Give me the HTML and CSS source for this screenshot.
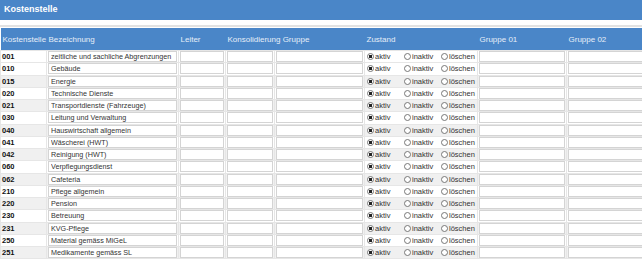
FILE: index.html
```html
<!DOCTYPE html>
<html lang="de">
<head>
    <meta charset="UTF-8">
    <meta name="viewport" content="width=device-width, initial-scale=1.0">
    <title>Kostenstelle</title>
    <link rel="stylesheet" href="styles.css">
</head>
<body>
    <div class="titlebar">Kostenstelle</div>
    <div class="spacer"></div>

    <table class="grid">
        <colgroup>
            <col class="c-code">
            <col class="c-name">
            <col class="c-leiter">
            <col class="c-kons">
            <col class="c-gruppe">
            <col class="c-state">
            <col class="c-g1">
            <col class="c-g2">
        </colgroup>
        <thead>
            <tr>
                <th>Kostenstelle</th>
                <th>Bezeichnung</th>
                <th>Leiter</th>
                <th colspan="2">Konsolidierung Gruppe</th>
                <th>Zustand</th>
                <th>Gruppe 01</th>
                <th>Gruppe 02</th>
            </tr>
        </thead>
        <tbody id="rows"></tbody>
    </table>

<script>
    let data = [
        ["001", "zeitliche und sachliche Abgrenzungen"],
        ["010", "Gebäude"],
        ["015", "Energie"],
        ["020", "Technische Dienste"],
        ["021", "Transportdienste (Fahrzeuge)"],
        ["030", "Leitung und Verwaltung"],
        ["040", "Hauswirtschaft allgemein"],
        ["041", "Wäscherei (HWT)"],
        ["042", "Reinigung (HWT)"],
        ["060", "Verpflegungsdienst"],
        ["062", "Cafeteria"],
        ["210", "Pflege allgemein"],
        ["220", "Pension"],
        ["230", "Betreuung"],
        ["231", "KVG-Pflege"],
        ["250", "Material gemäss MiGeL"],
        ["251", "Medikamente gemäss SL"]
    ];

    let rows = document.getElementById("rows");
    data.forEach(c => {
        rows.innerHTML += `<tr>
            <td class="code">${c[0]}</td>
            <td><input class="txt" type="text" value="${c[1]}"/></td>
            <td><input class="txt" type="text"/></td>
            <td><input class="txt" type="text"/></td>
            <td><input class="txt" type="text"/></td>
            <td class="state"><div class="opts">
                <label class="opt"><input type="radio" name="z${c[0]}" checked/>aktiv</label>
                <label class="opt"><input type="radio" name="z${c[0]}"/>inaktiv</label>
                <label class="opt"><input type="radio" name="z${c[0]}"/>löschen</label>
            </div></td>
            <td><input class="txt" type="text"/></td>
            <td><input class="txt" type="text"/></td>
        </tr>`;
    });
</script>
</body>
</html>
```

FILE: styles.css
```css
html, body {
    overflow: hidden;
}

body {
    font-family: Arial, "Liberation Sans", sans-serif;
    font-size: 7.5px;
    margin: 0;
    padding: 0;
    color: #222;
}

.titlebar {
    background-color: #4a86c8;
    color: #fff;
    font-weight: bold;
    font-size: 9px;
    height: 20px;
    line-height: 18px;
    padding-left: 4px;
}

.spacer {
    height: 5px;
    border-bottom: 2px solid #e2e2e2;
    margin-bottom: 1px;
}

.grid {
    border-collapse: collapse;
    table-layout: fixed;
    width: 656px;
}

.c-code { width: 46px; }
.c-name { width: 132px; }
.c-leiter { width: 47px; }
.c-kons { width: 49px; }
.c-gruppe { width: 90px; }
.c-state { width: 113px; }
.c-g1 { width: 89px; }
.c-g2 { width: 90px; }

th {
    background-color: #4a86c8;
    color: #e6eef8;
    font-weight: normal;
    font-size: 8px;
    text-align: left;
    height: 22px;
    padding: 0 2px;
    white-space: nowrap;
}

td {
    height: 11.25px;
    padding: 0 1px;
    border: 1px solid #e6e6e6;
    white-space: nowrap;
    overflow: hidden;
}

tbody tr:nth-child(2n+3) td {
    background-color: #f0f0f0;
}

td.code {
    font-weight: bold;
    color: #111;
    padding-left: 1px;
}

.txt {
    box-sizing: border-box;
    width: 100%;
    height: 11px;
    margin: 0;
    padding: 0 2px;
    border: 1px solid #d4d4d4;
    background-color: #fff;
    font-family: Arial, "Liberation Sans", sans-serif;
    font-size: 7.2px;
    color: #333;
    display: block;
}

.state {
    padding-left: 2px;
}

.opts {
    display: flex;
    align-items: center;
}

.opt {
    display: flex;
    align-items: center;
    gap: 1px;
    width: 37px;
    flex: none;
    color: #333;
}

.opt input {
    appearance: none;
    width: 7px;
    height: 7px;
    margin: 0;
    border: 1px solid #777;
    border-radius: 50%;
    background-color: #fff;
    box-sizing: border-box;
}

.opt input:checked {
    background: radial-gradient(circle, #222 0 1.6px, #fff 2px);
}
```
